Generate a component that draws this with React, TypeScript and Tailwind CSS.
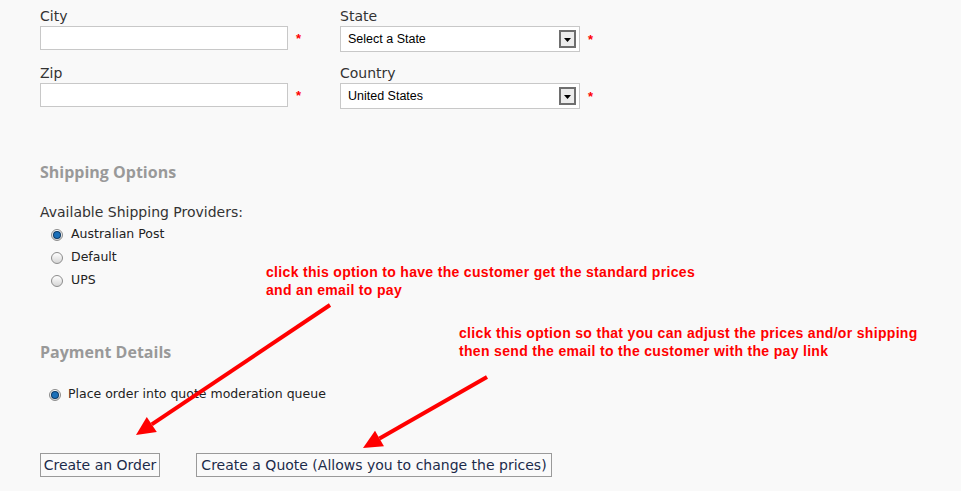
import React from "react";

function Radio({ checked }: { checked?: boolean }) {
  return (
    <span className="relative flex h-[12px] w-[12px] shrink-0 items-center justify-center rounded-full border border-[#8c8c8c] bg-linear-to-b from-[#ffffff] to-[#d6d6d6]">
      {checked && (
        <span className="h-[6px] w-[6px] rounded-full bg-[#1b6fb8] ring-1 ring-[#0d3a66]" />
      )}
    </span>
  );
}

function Star() {
  return <span className="ml-[8px] font-['Liberation_Sans',sans-serif] text-[13px] font-bold leading-none text-[#ff0000]">*</span>;
}

function TextField({ label, last }: { label: string; last?: boolean }) {
  return (
    <div className={last ? "" : "mb-[13px]"}>
      <div className="h-[20px] text-[14px] leading-[20px] text-[#333]">{label}</div>
      <div className="flex items-center">
        <div className="h-[24px] w-[248px] border border-[#c8c8c8] bg-white" />
        <Star />
      </div>
    </div>
  );
}

function SelectField({ label, value, last }: { label: string; value: string; last?: boolean }) {
  return (
    <div className={last ? "" : "mb-[11px]"}>
      <div className="h-[20px] text-[14px] leading-[20px] text-[#333]">{label}</div>
      <div className="flex items-center">
        <div className="flex h-[26px] w-[240px] items-center justify-between border border-[#c8c8c8] bg-white pl-[7px] pr-[3px]">
          <span className="font-['Liberation_Sans',sans-serif] text-[12.5px] text-black">{value}</span>
          <span className="flex h-[18px] w-[17px] items-center justify-center border-2 border-[#6e6e6e] bg-[#ececec]">
            <svg width="7" height="4" viewBox="0 0 7 4" className="mt-[2px]">
              <polygon points="0,0 7,0 3.5,4" fill="#000" />
            </svg>
          </span>
        </div>
        <Star />
      </div>
    </div>
  );
}

function arrowHead(x1: number, y1: number, x2: number, y2: number, len = 19, half = 9) {
  const dx = x2 - x1;
  const dy = y2 - y1;
  const l = Math.hypot(dx, dy);
  const ux = dx / l;
  const uy = dy / l;
  const bx = x2 - ux * len;
  const by = y2 - uy * len;
  const nx = -uy;
  const ny = ux;
  return {
    base: { x: bx, y: by },
    pts: `${x2},${y2} ${bx + nx * half},${by + ny * half} ${bx - nx * half},${by - ny * half}`,
  };
}

function Arrow({ x1, y1, x2, y2 }: { x1: number; y1: number; x2: number; y2: number }) {
  const h = arrowHead(x1, y1, x2, y2);
  return (
    <g>
      <line x1={x1} y1={y1} x2={h.base.x} y2={h.base.y} stroke="#ff0000" strokeWidth="4" />
      <polygon points={h.pts} fill="#ff0000" />
    </g>
  );
}

export default function App() {
  return (
    <div className="relative h-[491px] w-[961px] overflow-hidden bg-[#f9f9f9] font-['DejaVu_Sans',sans-serif]">
      <div className="pl-[40px] pt-[6px]">
        <div className="flex">
          <div className="w-[300px]">
            <TextField label="City" />
            <TextField label="Zip" last />
          </div>
          <div>
            <SelectField label="State" value="Select a State" />
            <SelectField label="Country" value="United States" last />
          </div>
        </div>

        <div className="mt-[51px] h-[24px] font-['Open_Sans',sans-serif] text-[16px] font-bold leading-[24px] text-[#999]">
          Shipping Options
        </div>
        <div className="mt-[18px] h-[20px] text-[14px] leading-[20px] text-[#333]">
          Available Shipping Providers:
        </div>
        <div className="pl-[11px] pt-[1px]">
          {[
            { t: "Australian Post", c: true },
            { t: "Default", c: false },
            { t: "UPS", c: false },
          ].map((r) => (
            <div key={r.t} className="flex h-[23px] items-center gap-[8px] text-[12.5px] text-[#222]">
              <Radio checked={r.c} />
              <span>{r.t}</span>
            </div>
          ))}
        </div>

        <div className="mt-[48px] h-[24px] font-['Open_Sans',sans-serif] text-[16px] font-bold leading-[24px] text-[#999]">
          Payment Details
        </div>
        <div className="mt-[19px] flex h-[23px] items-center gap-[7px] pl-[9px] text-[12.5px] text-[#222]">
          <Radio checked />
          <span>Place order into quote moderation queue</span>
        </div>

        <div className="mt-[47px] flex gap-[36px]">
          <button className="h-[24px] w-[120px] border border-[#9a9a9a] bg-[#fafafa] text-[14px] leading-[22px] text-[#1c2b4a]">
            Create an Order
          </button>
          <button className="h-[24px] w-[356px] border border-[#9a9a9a] bg-[#fafafa] text-[14px] leading-[22px] text-[#1c2b4a]">
            Create a Quote (Allows you to change the prices)
          </button>
        </div>
      </div>

      <div className="absolute left-[266px] top-[263px] font-['Liberation_Sans',sans-serif] text-[14px] font-bold leading-[18px] tracking-[0.32px] text-[#ff0000]">
        <div>click this option to have the customer get the standard prices</div>
        <div>and an email to pay</div>
      </div>
      <div className="absolute left-[459px] top-[324px] font-['Liberation_Sans',sans-serif] text-[14px] font-bold leading-[18px] tracking-[0.32px] text-[#ff0000]">
        <div>click this option so that you can adjust the prices and/or shipping</div>
        <div>then send the email to the customer with the pay link</div>
      </div>

      <svg className="pointer-events-none absolute left-0 top-0" width="961" height="491">
        <Arrow x1={330} y1={305} x2={136} y2={435} />
        <Arrow x1={487} y1={377} x2={363} y2={448} />
      </svg>
    </div>
  );
}
